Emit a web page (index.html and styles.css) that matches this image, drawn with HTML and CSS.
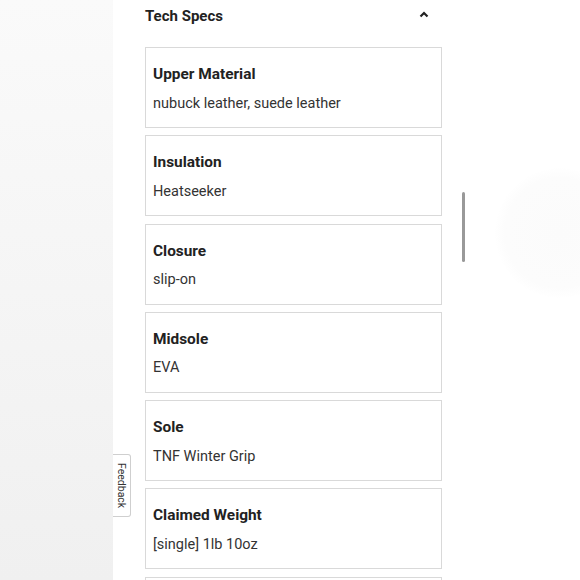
FILE: index.html
```html
<!DOCTYPE html>
<html>
<head>
<meta charset="utf-8">
<link rel="stylesheet" href="styles.css">
</head>
<body>
<div class="page">
  <aside class="side"></aside>
  <main class="main">
    <section class="specs">
      <div class="specs-head">
        <h2 class="specs-title">Tech Specs</h2>
        <svg class="chev" width="10" height="7" viewBox="0 0 10 7"><path d="M1.5 5.5 L5 2 L8.5 5.5" fill="none" stroke="#222" stroke-width="2.2"/></svg>
      </div>
      <div class="cards">
        <div class="card"><div class="label">Upper Material</div><div class="value">nubuck leather, suede leather</div></div>
        <div class="card"><div class="label">Insulation</div><div class="value">Heatseeker</div></div>
        <div class="card"><div class="label">Closure</div><div class="value">slip-on</div></div>
        <div class="card"><div class="label">Midsole</div><div class="value">EVA</div></div>
        <div class="card"><div class="label">Sole</div><div class="value">TNF Winter Grip</div></div>
        <div class="card"><div class="label">Claimed Weight</div><div class="value">[single] 1lb 10oz</div></div>
        <div class="card card-empty"></div>
      </div>
    </section>
    <div class="scrollbar"></div>
    <div class="glow"></div>
  </main>
  <div class="feedback">Feedback</div>
</div>
</body>
</html>
```
FILE: styles.css
```css
html, body { margin: 0; padding: 0; }
body {
  font-family: Roboto, "Liberation Sans", Arial, sans-serif;
  background: #fff;
  color: #222;
  overflow: hidden;
}
.page {
  display: flex;
  height: 580px;
  position: relative;
  overflow: hidden;
}
.side {
  width: 113px;
  flex: none;
  background: linear-gradient(to bottom, #fafafa 0%, #f4f4f4 60%, #f0f0f0 100%);
}
.main {
  flex: 1;
  position: relative;
  padding-left: 32px;
}
.specs { width: 297px; }
.specs-head {
  height: 32px;
  display: flex;
  align-items: center;
  justify-content: space-between;
  padding-right: 13px;
  margin-bottom: 15px;
}
.specs-title {
  margin: 0;
  font-size: 15px;
  font-weight: 700;
  line-height: 20px;
  color: #222;
}
.chev { display: block; margin-top: -4px; }
.cards {
  display: flex;
  flex-direction: column;
  gap: 7.3px;
}
.card {
  border: 1px solid #d9d9d9;
  padding: 16px 7px 13.5px;
  background: #fff;
}
.card-empty { height: 49px; }
.label {
  font-size: 15.4px;
  font-weight: 700;
  line-height: 20px;
  color: #222;
}
.value {
  margin-top: 9.5px;
  font-size: 14.5px;
  line-height: 20px;
  color: #333;
}
.scrollbar {
  position: absolute;
  left: 349px;
  top: 192px;
  width: 3px;
  height: 70px;
  background: #999;
  border-radius: 2px;
}
.glow {
  position: absolute;
  left: 382px;
  top: 168px;
  width: 130px;
  height: 130px;
  border-radius: 50%;
  background: radial-gradient(circle, #fbfbfb 0%, #fcfcfc 60%, rgba(255,255,255,0) 72%);
}
.feedback {
  position: absolute;
  left: 113px;
  top: 454px;
  width: 18px;
  height: 63px;
  border: 1px solid #cfcfcf;
  border-left: none;
  border-radius: 0 3px 3px 0;
  background: #fff;
  writing-mode: vertical-rl;
  font-size: 10.5px;
  font-weight: 400;
  color: #333;
  display: flex;
  align-items: center;
  justify-content: center;
  box-sizing: border-box;
}
```
